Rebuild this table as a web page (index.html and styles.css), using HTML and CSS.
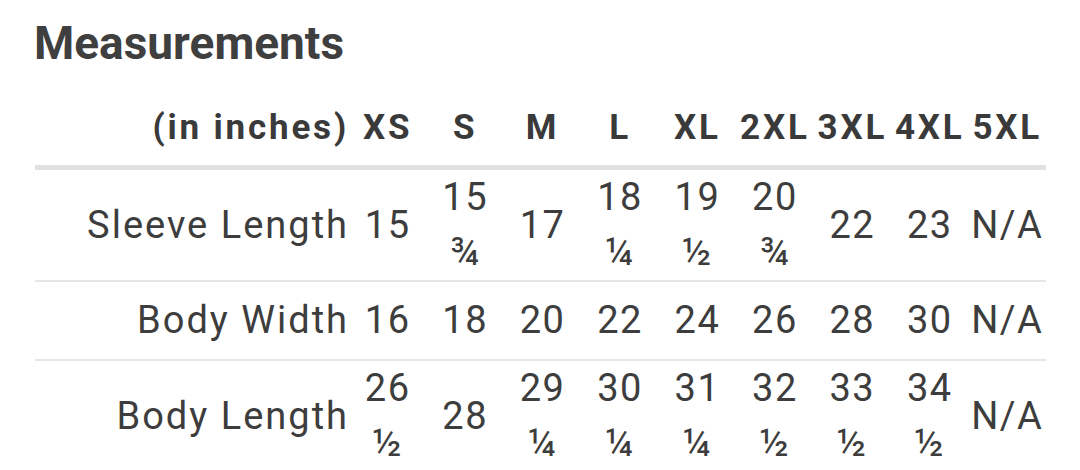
FILE: index.html
```html
<!DOCTYPE html>
<html lang="en">
<head>
<meta charset="utf-8">
<title>Measurements</title>
<link rel="stylesheet" href="styles.css">
</head>
<body>
<section class="sheet">
  <h1 class="title">Measurements</h1>
  <table class="sizes">
    <colgroup>
      <col class="col-label">
      <col class="col-size"><col class="col-size"><col class="col-size">
      <col class="col-size"><col class="col-size"><col class="col-size">
      <col class="col-size"><col class="col-size"><col class="col-size">
    </colgroup>
    <thead>
      <tr>
        <th class="label">(in inches)</th>
        <th>XS</th><th>S</th><th>M</th><th>L</th><th>XL</th><th>2XL</th><th>3XL</th><th>4XL</th><th>5XL</th>
      </tr>
    </thead>
    <tbody>
      <tr>
        <th class="label">Sleeve Length</th>
        <td>15</td><td>15 ¾</td><td>17</td><td>18 ¼</td><td>19 ½</td><td>20 ¾</td><td>22</td><td>23</td><td>N/A</td>
      </tr>
      <tr>
        <th class="label">Body Width</th>
        <td>16</td><td>18</td><td>20</td><td>22</td><td>24</td><td>26</td><td>28</td><td>30</td><td>N/A</td>
      </tr>
      <tr>
        <th class="label">Body Length</th>
        <td>26 ½</td><td>28</td><td>29 ¼</td><td>30 ¼</td><td>31 ¼</td><td>32 ½</td><td>33 ½</td><td>34 ½</td><td>N/A</td>
      </tr>
    </tbody>
  </table>
</section>
</body>
</html>
```
FILE: styles.css
```css
html, body {
  margin: 0;
  padding: 0;
  background: #ffffff;
}

body {
  font-family: Roboto, "Liberation Sans", Arial, sans-serif;
  color: #3d3d3d;
}

.sheet {
  padding: 16px 34px 0 34px;
}

.title {
  margin: 0;
  font-size: 46px;
  font-weight: 700;
  line-height: normal;
  color: #3f3f3f;
}

.sizes {
  margin-top: 20px;
  margin-left: 1px;
  width: 1011px;
  table-layout: fixed;
  border-collapse: separate;
  border-spacing: 0;
}

.col-label {
  width: 314px;
}

.sizes thead th {
  font-size: 35px;
  font-weight: 700;
  letter-spacing: 2.8px;
  line-height: normal;
  padding: 17px 0 17px;
  text-align: center;
  white-space: nowrap;
  color: #3a3a3a;
  border-bottom: 5px solid #e1e1e1;
}

.sizes thead th.label {
  text-align: right;
}

.sizes tbody th,
.sizes tbody td {
  font-size: 38px;
  font-weight: 400;
  line-height: 55px;
  height: 77px;
  padding: 0 2px;
  vertical-align: middle;
  border-bottom: 2px solid #e6e6e6;
}

.sizes tbody td {
  text-align: center;
  letter-spacing: 1.5px;
}

.sizes tbody th.label {
  text-align: right;
  letter-spacing: 2px;
  padding: 0;
  white-space: nowrap;
}
```
